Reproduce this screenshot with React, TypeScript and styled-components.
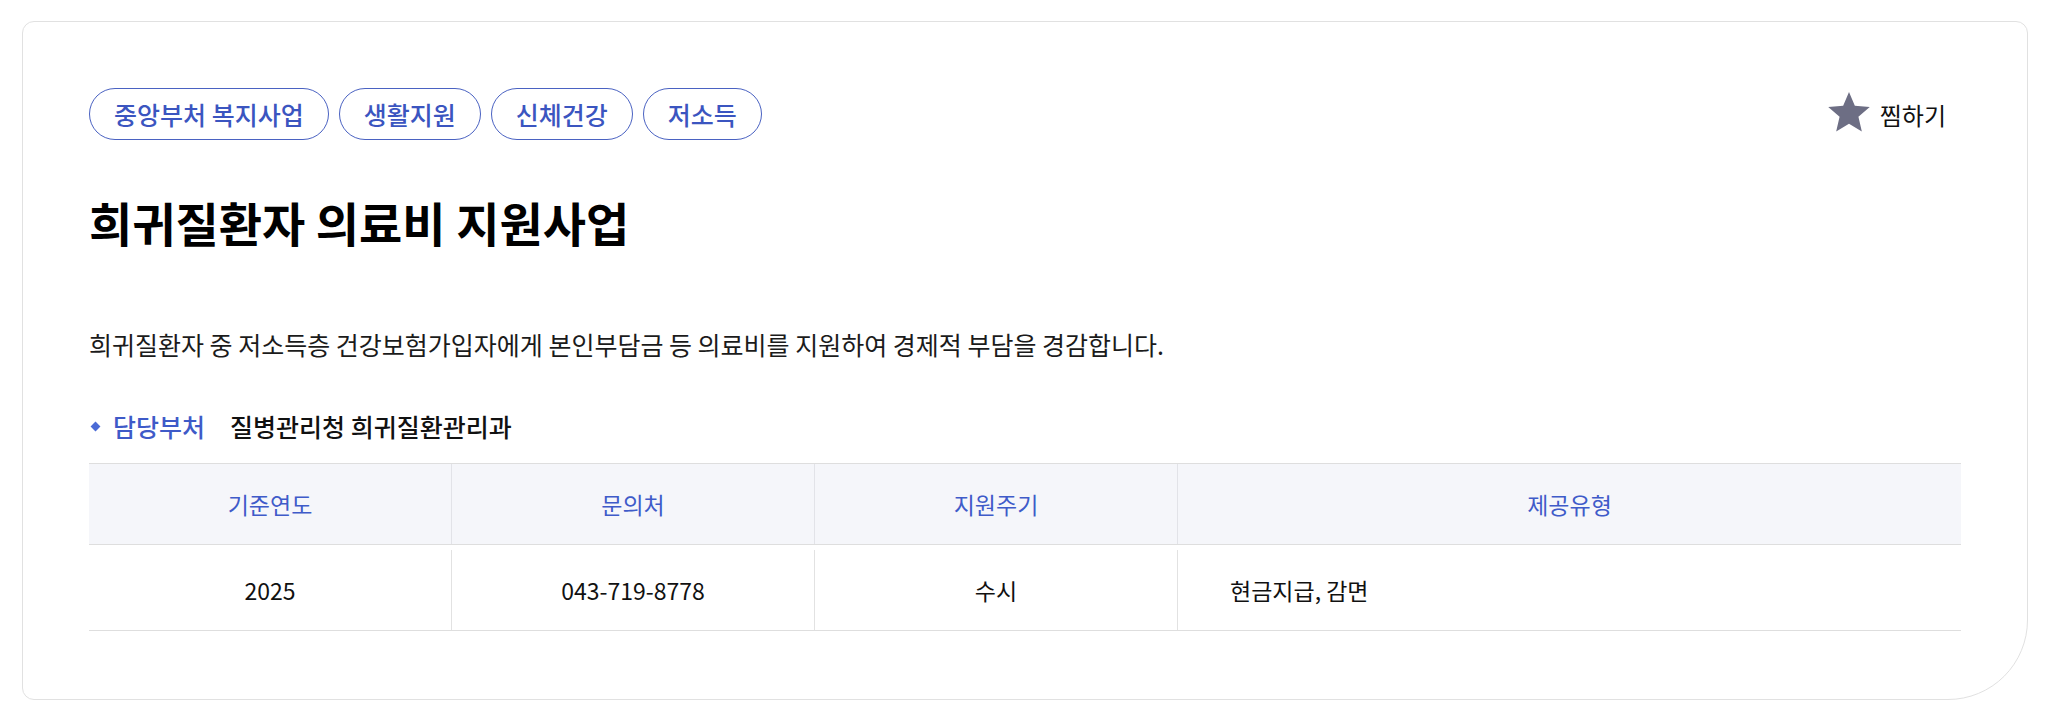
import React from 'react';
import styled, { createGlobalStyle } from 'styled-components';

const FONT = `"Noto Sans CJK KR", "Noto Sans", sans-serif`;

const GlobalStyle = createGlobalStyle`
  * {
    box-sizing: border-box;
  }

  body {
    margin: 0;
    background: #ffffff;
    font-family: ${FONT};
    color: #111111;
  }
`;

const TAGS = ['중앙부처 복지사업', '생활지원', '신체건강', '저소득'];

const TABLE_HEAD = ['기준연도', '문의처', '지원주기', '제공유형'];
const TABLE_ROW = ['2025', '043-719-8778', '수시', '현금지급, 감면'];

const StarIcon: React.FC = () => (
  <svg width="42" height="40" viewBox="2 2 20 19.27" aria-hidden="true">
    <path
      fill="#6d6e84"
      d="M12 17.27L18.18 21l-1.64-7.03L22 9.24l-7.19-.61L12 2 9.19 8.63 2 9.24l5.46 4.73L5.82 21z"
    />
  </svg>
);

export default function App() {
  return (
    <Page>
      <GlobalStyle />
      <Card>
        <TopRow>
          <TagList>
            {TAGS.map((tag) => (
              <Tag key={tag}>{tag}</Tag>
            ))}
          </TagList>
          <BookmarkButton type="button">
            <StarIcon />
            찜하기
          </BookmarkButton>
        </TopRow>

        <Title>희귀질환자 의료비 지원사업</Title>

        <Description>
          희귀질환자 중 저소득층 건강보험가입자에게 본인부담금 등 의료비를 지원하여 경제적 부담을
          경감합니다.
        </Description>

        <InfoLine>
          <InfoLabel>담당부처</InfoLabel>
          <InfoValue>질병관리청 희귀질환관리과</InfoValue>
        </InfoLine>

        <InfoTable>
          <HeadRow>
            {TABLE_HEAD.map((label) => (
              <HeadCell key={label}>{label}</HeadCell>
            ))}
          </HeadRow>
          <BodyRow>
            {TABLE_ROW.map((value, i) => (
              <BodyCell key={value} $alignLeft={i === TABLE_ROW.length - 1}>
                {value}
              </BodyCell>
            ))}
          </BodyRow>
        </InfoTable>
      </Card>
    </Page>
  );
}

const Page = styled.div`
  padding: 21px 20px 18px 22px;
`;

const Card = styled.section`
  display: flex;
  flex-direction: column;
  border: 1px solid #e1e1e1;
  border-radius: 12px 12px 80px 12px;
  background: #ffffff;
  padding: 66px 66px 68px;
`;

const TopRow = styled.div`
  display: flex;
  align-items: center;
  justify-content: space-between;
`;

const TagList = styled.ul`
  display: flex;
  gap: 10px;
  margin: 0;
  padding: 0;
  list-style: none;
`;

const Tag = styled.li`
  display: flex;
  align-items: center;
  height: 52px;
  padding: 0 24px;
  border: 1px solid #4a62c2;
  border-radius: 26px;
  color: #3b55c0;
  font-size: 25px;
  font-weight: 500;
  white-space: nowrap;
`;

const BookmarkButton = styled.button`
  display: flex;
  align-items: center;
  gap: 10px;
  margin: 0 15px 0 0;
  padding: 0;
  border: none;
  background: none;
  font-family: ${FONT};
  font-size: 24px;
  font-weight: 400;
  color: #111111;
  cursor: pointer;

  svg {
    margin-top: -4px;
  }
`;

const Title = styled.h1`
  margin: 54px 0 0;
  font-size: 47px;
  line-height: 56px;
  font-weight: 700;
  color: #000000;
`;

const Description = styled.p`
  margin: 78px 0 0;
  font-size: 25px;
  line-height: 33px;
  color: #1b1b1b;
`;

const InfoLine = styled.div`
  display: flex;
  align-items: center;
  gap: 25px;
  margin-top: 49px;
  font-size: 25px;
  line-height: 33px;
`;

const InfoLabel = styled.span`
  display: flex;
  align-items: center;
  gap: 14px;
  color: #3e5ac8;
  font-weight: 500;

  &::before {
    content: '';
    width: 7px;
    height: 7px;
    margin-left: 3px;
    background: #4b6bd6;
    transform: rotate(45deg);
  }
`;

const InfoValue = styled.span`
  color: #111111;
  font-weight: 500;
`;

const InfoTable = styled.div`
  margin-top: 20px;
  font-size: 23px;
`;

const Row = styled.div`
  display: grid;
  grid-template-columns: 362px 363px 363px 1fr;
`;

const HeadRow = styled(Row)`
  border-top: 1px solid #dedede;
  border-bottom: 1px solid #dedede;
  background: #f5f6fa;
`;

const HeadCell = styled.div`
  display: flex;
  align-items: center;
  justify-content: center;
  height: 80px;
  color: #3f5bc9;
  font-weight: 400;

  & + & {
    border-left: 1px solid #e2e3e8;
  }
`;

const BodyRow = styled(Row)`
  padding-top: 5px;
  border-bottom: 1px solid #dedede;
`;

const BodyCell = styled.div<{ $alignLeft?: boolean }>`
  display: flex;
  align-items: center;
  justify-content: ${({ $alignLeft }) => ($alignLeft ? 'flex-start' : 'center')};
  height: 80px;
  padding: ${({ $alignLeft }) => ($alignLeft ? '0 0 0 52px' : '0')};
  color: #111111;
  font-weight: 400;

  & + & {
    border-left: 1px solid #e2e2e2;
  }
`;
